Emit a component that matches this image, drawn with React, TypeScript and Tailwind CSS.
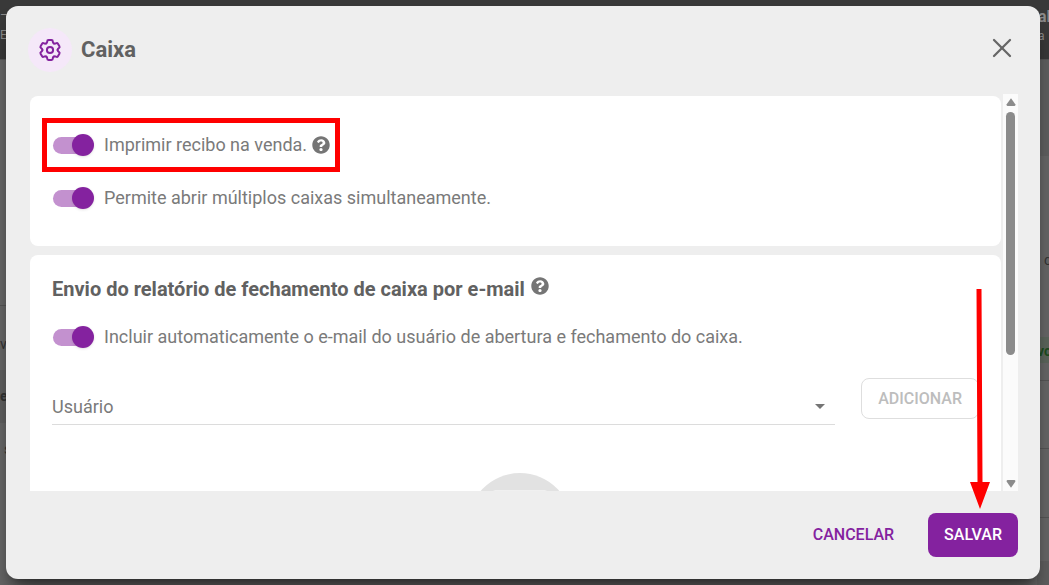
import { useState } from "react";
import { X } from "lucide-react";
import { FaQuestionCircle } from "react-icons/fa";

type ToggleProps = {
  id: string;
  label: string;
  help?: boolean;
  highlighted?: boolean;
};

const gearTeeth = [0, 60, 120, 180, 240, 300];

function GearIcon() {
  return (
    <svg
      viewBox="-12 -12 24 24"
      className="size-6 fill-none stroke-[#84229f] stroke-2"
      strokeLinecap="round"
    >
      <circle r="3.1" />
      {gearTeeth.map((angle) => (
        <path
          key={angle}
          transform={`rotate(${angle})`}
          d="M-3.8-6.58C-3.2-7-2.8-7.3-2.8-8.2V-8.6C-2.8-9.5-2.3-10-1.5-10H1.5C2.3-10 2.8-9.5 2.8-8.6V-8.2C2.8-7.3 3.2-7 3.8-6.58"
        />
      ))}
    </svg>
  );
}

function Toggle({ id, label, help, highlighted }: ToggleProps) {
  const [checked, setChecked] = useState(true);

  return (
    <div className="flex h-[53px] items-center">
      <div className="relative flex items-center gap-[10px]">
        <input
          id={id}
          type="checkbox"
          role="switch"
          checked={checked}
          onChange={() => setChecked(!checked)}
          className="relative h-[22px] w-[42px] shrink-0 cursor-pointer appearance-none before:absolute before:top-[3px] before:left-px before:h-[17px] before:w-[37px] before:rounded-full before:bg-[#c391cf] after:absolute after:top-0 after:left-0 after:size-[22px] after:rounded-full after:bg-[#84229f] after:shadow-sm after:shadow-black/10 checked:after:left-5"
        />
        <label htmlFor={id} className="text-lg leading-6 text-[#7a7a7a]">
          {label}
        </label>
        {help && (
          <FaQuestionCircle className="-ml-[5px] size-[18px] shrink-0 text-[#757575]" />
        )}
        {highlighted && (
          <div className="pointer-events-none absolute -inset-x-[10px] -inset-y-[15px] border-5 border-[#ff0000]" />
        )}
      </div>
    </div>
  );
}

// Page that stays dimmed behind the dialog
function Backdrop() {
  return (
    <div
      aria-hidden="true"
      className="absolute inset-0 flex flex-col overflow-hidden bg-[#676767] text-[#333]"
    >
      <div className="flex h-15 shrink-0 justify-between border-b border-[#555] bg-[#393939] text-xs leading-4 text-[#8a8a8a]">
        <div className="pt-[7px]">
          <p>–</p>
          <p className="pt-1">El</p>
        </div>
        <div className="w-[11px] pt-[9px]">
          <p className="text-base leading-4 font-bold">al</p>
          <p className="pt-[3px]">a</p>
        </div>
      </div>
      <div className="flex flex-1 justify-between text-sm">
        <div className="w-5 pt-[245px]">
          <div className="h-[65px] border-t border-[#555] pt-7">v</div>
          <div className="h-[53px] bg-[#5f5f5f] pt-4 font-bold">e</div>
          <div className="pt-4 pl-1">s</div>
        </div>
        <div className="w-3">
          <div className="h-24 bg-[#606060]" />
          <div className="h-[181px] pt-[94px] pl-[7px]">c</div>
          <div className="h-[26px] bg-[#5c665c] pt-1 font-bold text-[#1d4d20]">
            vo
          </div>
          <div className="h-[17px]" />
          <div className="h-[68px] border-t border-[#555]" />
          <div className="h-[69px] border-t border-[#555]" />
          <div className="h-11 border-t border-[#555]" />
          <div className="h-8 bg-[#5f5f5f]" />
        </div>
      </div>
    </div>
  );
}

function Scrollbar() {
  return (
    <div
      aria-hidden="true"
      className="flex w-[15px] shrink-0 flex-col items-center bg-[#fbfbfb] pt-1 pb-[3px] text-[#8b8b8b]"
    >
      <svg viewBox="0 0 10 8" className="h-2 w-[10px] fill-current">
        <path d="M5 0.3 9.3 6.2Q9.7 8 8.5 8h-7Q.3 8 .7 6.2Z" />
      </svg>
      <div className="mt-[6px] min-h-0 flex-1">
        <div className="h-[66%] w-[9px] rounded-full bg-current" />
      </div>
      <svg viewBox="0 0 10 8" className="h-2 w-[10px] fill-current">
        <path d="M5 7.7.7 1.8Q.3 0 1.5 0h7Q9.7 0 9.3 1.8Z" />
      </svg>
    </div>
  );
}

export default function App() {
  return (
    <div className="relative flex h-screen font-[Roboto,sans-serif]">
      <Backdrop />

      <div
        role="dialog"
        aria-labelledby="dialog-title"
        className="relative mt-[6px] mr-[9px] mb-[6px] ml-[6px] flex min-w-0 flex-1 flex-col rounded-xl bg-[#eeeeee] py-[22px] shadow-xl shadow-black/40"
      >
        {/* Header */}
        <header className="flex items-center gap-[9px] px-[22px]">
          <div className="flex size-11 items-center justify-center rounded-full bg-[#f5e8f9]">
            <GearIcon />
          </div>
          <h1
            id="dialog-title"
            className="flex-1 text-[22px] leading-7 font-bold text-[#616161]"
          >
            Caixa
          </h1>
          <button
            type="button"
            aria-label="Fechar"
            className="self-start pt-1 text-[#666]"
          >
            <X className="size-8" strokeWidth={1.7} />
          </button>
        </header>

        {/* Content */}
        <div className="mt-[22px] flex min-h-0 flex-1 gap-[2px] pr-[22px] pl-6">
          <div className="min-w-0 flex-1 overflow-hidden pt-[2px]">
            <section className="rounded-lg bg-white p-[22px]">
              <Toggle
                id="print-receipt"
                label="Imprimir recibo na venda."
                help
                highlighted
              />
              <Toggle
                id="multiple-registers"
                label="Permite abrir múltiplos caixas simultaneamente."
              />
            </section>

            <section className="mt-[9px] rounded-lg bg-white p-[22px]">
              <h2 className="flex gap-[6px] text-xl leading-6 font-bold text-[#616161]">
                Envio do relatório de fechamento de caixa por e-mail
                <FaQuestionCircle className="size-[18px] shrink-0 text-[#757575]" />
              </h2>
              <div className="mt-[9px]">
                <Toggle
                  id="include-email"
                  label="Incluir automaticamente o e-mail do usuário de abertura e fechamento do caixa."
                />
              </div>

              <div className="mt-[15px] flex items-end gap-[26px]">
                <div className="relative flex-1">
                  <select
                    aria-label="Usuário"
                    className="block h-9 w-full appearance-none border-b border-[#dcdcdc] text-lg leading-6 text-[#7a7a7a] outline-none"
                  >
                    <option>Usuário</option>
                  </select>
                  <svg
                    viewBox="0 0 10 5"
                    className="pointer-events-none absolute top-[15px] right-[10px] h-[5px] w-[10px] fill-[#757575]"
                  >
                    <path d="M0 0h10L5 5z" />
                  </svg>
                </div>
                <button
                  type="button"
                  disabled
                  className="mb-[6px] h-[41px] rounded-lg border border-[#dedede] px-4 text-base font-medium text-[#bdbdbd]"
                >
                  ADICIONAR
                </button>
              </div>

              {/* Empty list */}
              <div className="mt-12 flex justify-center pl-2">
                <svg viewBox="0 0 104 104" className="size-26">
                  <circle cx="52" cy="52" r="52" fill="#e2e2e2" />
                  <rect x="24" y="17" width="56" height="70" rx="4" fill="#f0f0f0" />
                </svg>
              </div>
            </section>
          </div>
          <Scrollbar />
        </div>

        {/* Footer */}
        <footer className="relative mt-[22px] flex justify-end gap-[18px] px-[22px]">
          <button
            type="button"
            className="h-11 rounded-lg px-4 text-base font-medium text-[#84229f]"
          >
            CANCELAR
          </button>
          <button
            type="button"
            className="h-11 rounded-lg bg-[#84229f] px-4 text-base font-medium text-white"
          >
            SALVAR
          </button>
          <svg
            viewBox="0 0 20 220"
            className="pointer-events-none absolute right-[50px] bottom-full mb-1 h-[220px] w-5 fill-[#ff0000]"
          >
            <path d="M6.500 0h5L12.500 193H20L10 220 0 193h7.500Z" />
          </svg>
        </footer>
      </div>
    </div>
  );
}
